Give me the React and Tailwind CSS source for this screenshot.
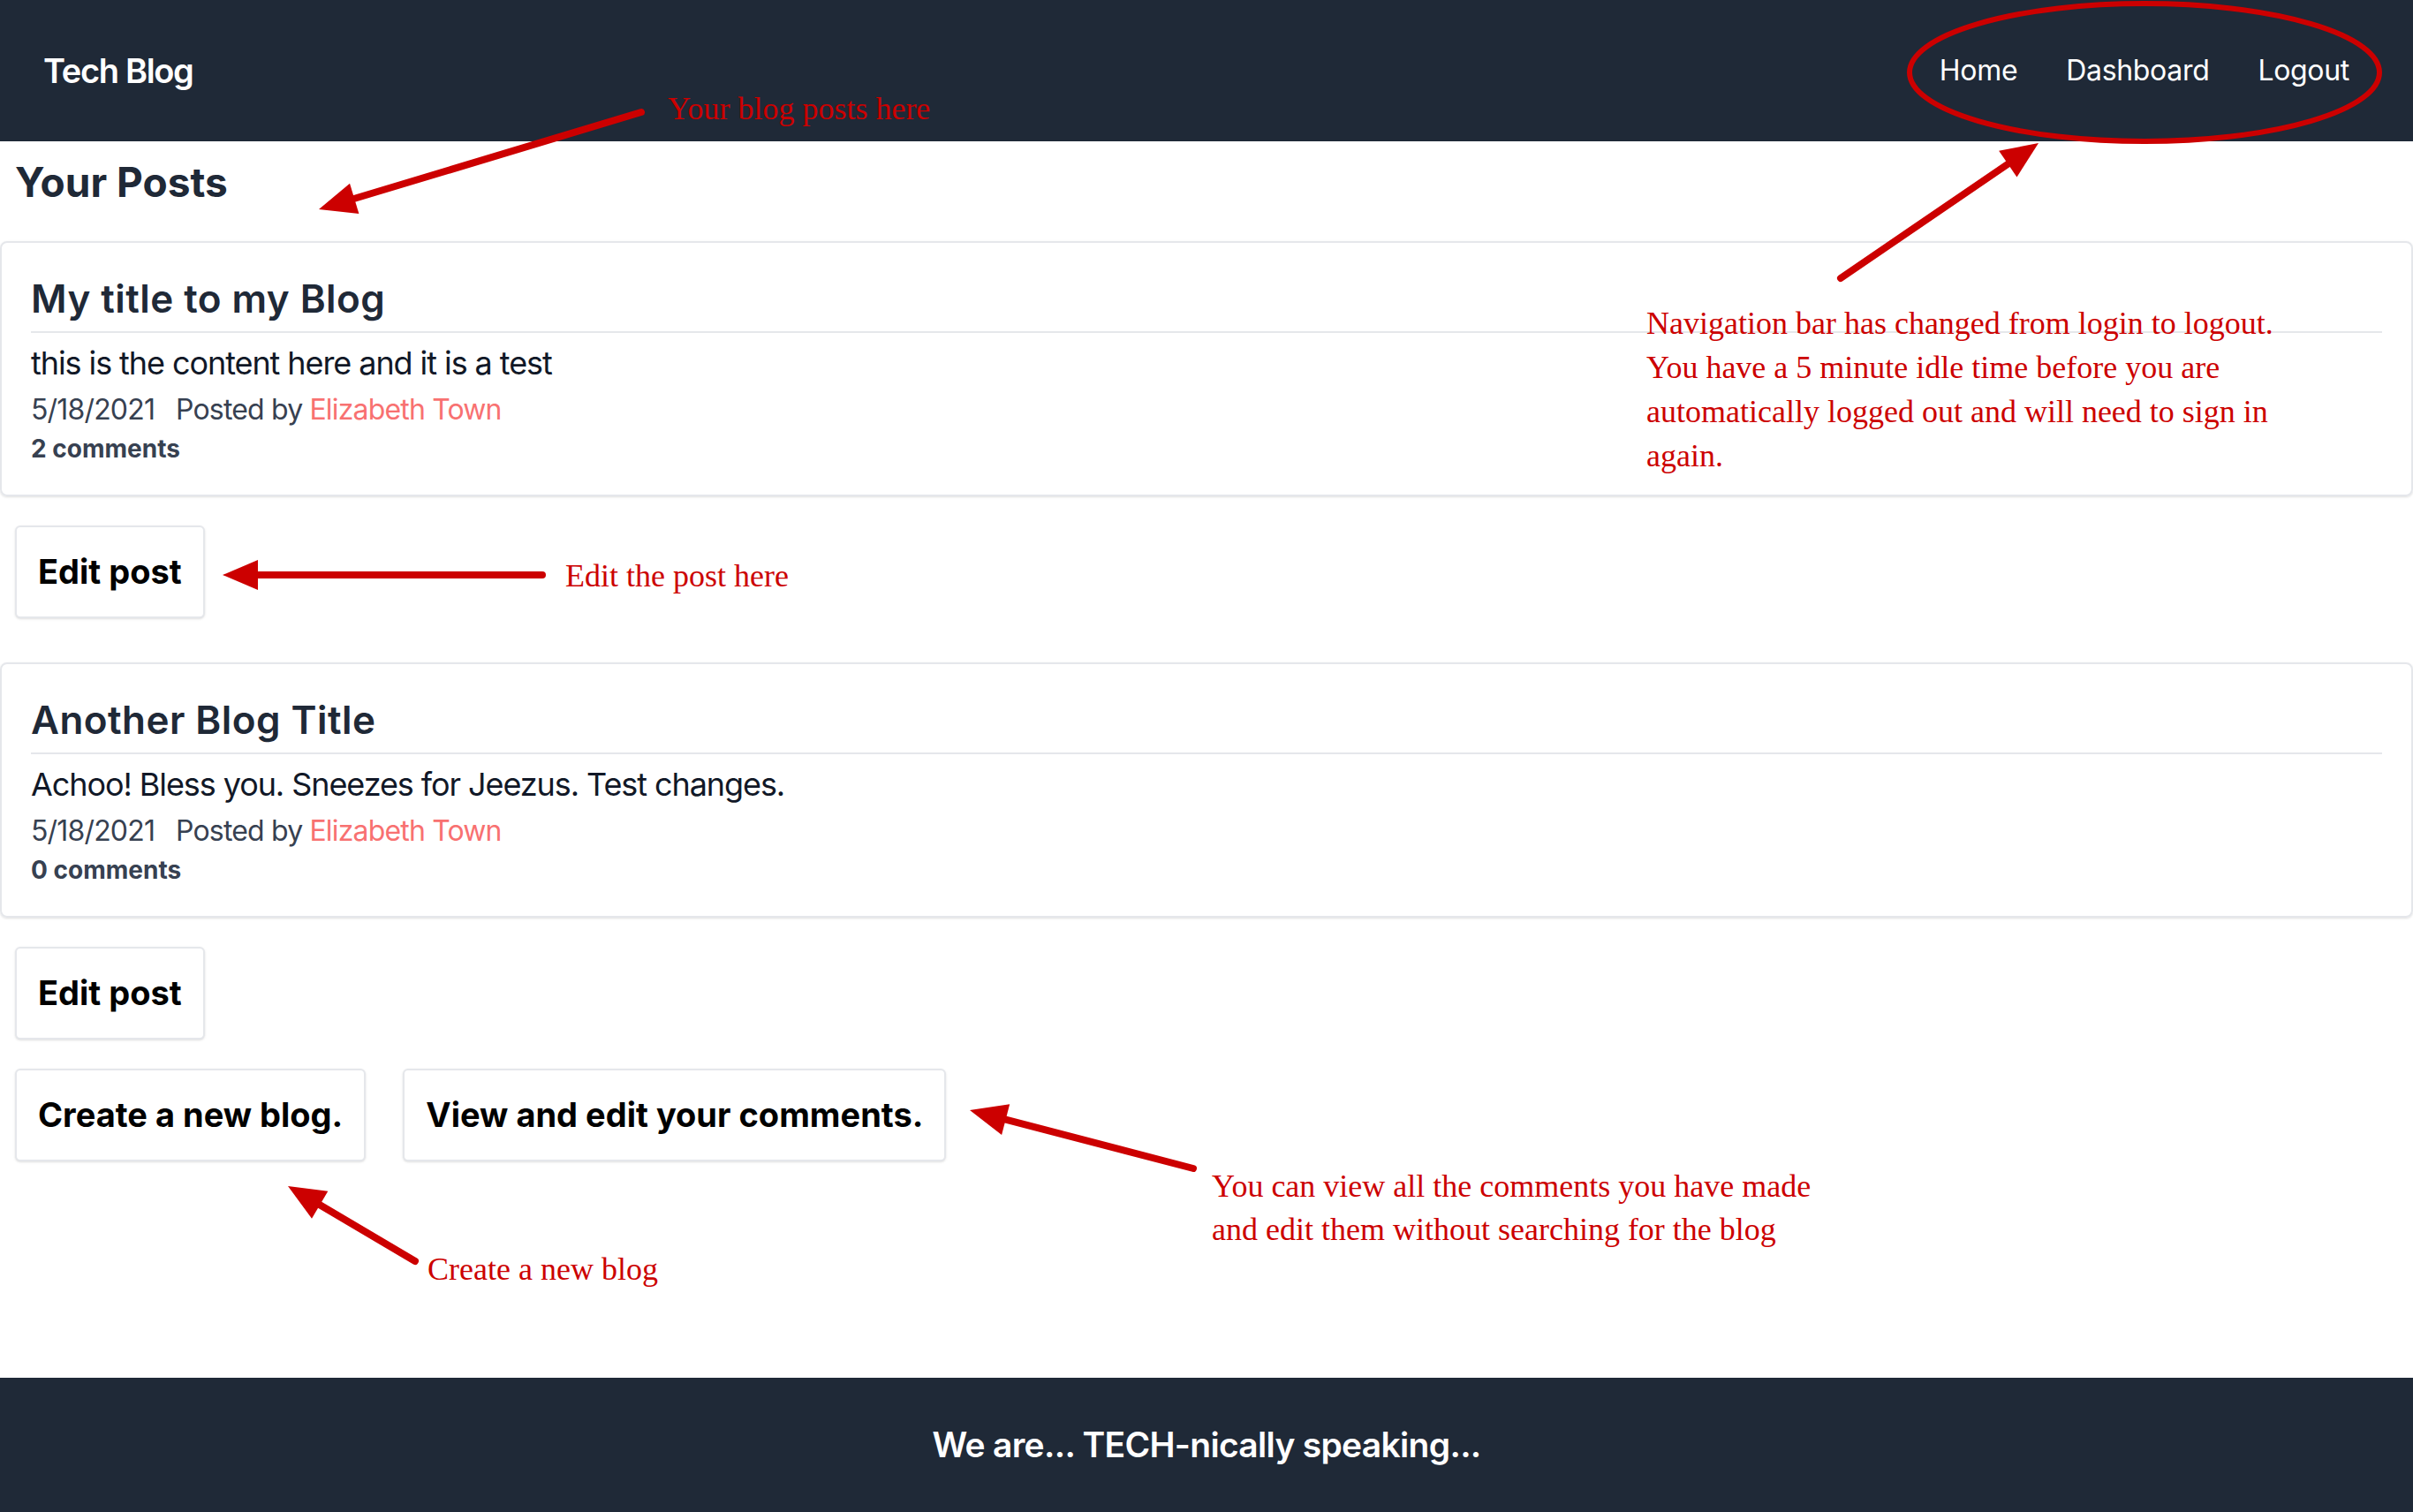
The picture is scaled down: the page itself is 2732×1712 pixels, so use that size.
import React from "react";

const posts = [
  {
    id: 1,
    title: "My title to my Blog",
    content: "this is the content here and it is a test",
    date: "5/18/2021",
    author: "Elizabeth Town",
    comments: 2,
  },
  {
    id: 2,
    title: "Another Blog Title",
    content: "Achoo! Bless you. Sneezes for Jeezus. Test changes.",
    date: "5/18/2021",
    author: "Elizabeth Town",
    comments: 0,
  },
];

// arrow drawn from tail to tip, head is a filled triangle
function Arrow({ from, to, len = 42, half = 18 }) {
  const dx = to[0] - from[0];
  const dy = to[1] - from[1];
  const d = Math.hypot(dx, dy);
  const ux = dx / d;
  const uy = dy / d;
  const bx = to[0] - ux * len;
  const by = to[1] - uy * len;
  const px = -uy * half;
  const py = ux * half;
  const pts = `${to[0]},${to[1]} ${bx + px},${by + py} ${bx - px},${by - py}`;
  return (
    <g>
      <line
        x1={from[0]}
        y1={from[1]}
        x2={bx + ux * 4}
        y2={by + uy * 4}
        stroke="#cc0000"
        strokeWidth="8"
        strokeLinecap="round"
      />
      <polygon points={pts} fill="#cc0000" />
    </g>
  );
}

function Button({ children }) {
  return (
    <button className="flex h-[105px] items-center rounded-md border-2 border-[#e5e7eb] bg-white px-[24px] text-[38px] font-bold text-black shadow-sm">
      {children}
    </button>
  );
}

function PostCard({ post }) {
  return (
    <div className="rounded-lg border-2 border-[#e5e7eb] px-[33px] pt-[37px] pb-[35px] shadow-sm">
      <h3 className="border-b-2 border-[#e5e7eb] pb-[11px] text-[44px] leading-[52px] font-semibold tracking-[0.01em] text-[#1f2937]">
        {post.title}
      </h3>
      <p className="mt-[10px] text-[36px] leading-[48px] tracking-[-0.03em] text-[#111827]">
        {post.content}
      </p>
      <p className="mt-[7px] text-[32px] leading-[44px] tracking-[-0.026em] text-[#374151]">
        {post.date}
        <span className="ml-[24px]">Posted by </span>
        <span className="text-[#f87171]">{post.author}</span>
      </p>
      <p className="mt-[5px] text-[28px] leading-[34px] font-bold text-[#374151]">
        {post.comments} comments
      </p>
    </div>
  );
}

export default function App() {
  return (
    <div className="relative flex min-h-screen flex-col bg-white font-['Inter',sans-serif]">
      {/* ── Nav ── */}
      <header className="flex h-[160px] items-center justify-between bg-[#1f2937] pl-[49px] pr-[72px] text-white">
        <span className="text-[38px] font-semibold tracking-[-0.035em]">Tech Blog</span>
        <nav className="flex items-center gap-[55px] text-[32px] tracking-[-0.01em]">
          <a>Home</a>
          <a>Dashboard</a>
          <a>Logout</a>
        </nav>
      </header>

      {/* ── Dashboard ── */}
      <main className="flex-1 pb-[60px]">
        <h2 className="ml-[17px] mt-[18px] text-[46px] leading-[57px] font-bold text-[#1f2937]">
          Your Posts
        </h2>

        <div className="mt-[38px] flex flex-col">
          {posts.map((post, i) => (
            <div key={post.id} className={i > 0 ? "mt-[50px]" : ""}>
              <PostCard post={post} />
              <div className="ml-[17px] mt-[33px] flex">
                <Button>Edit post</Button>
              </div>
            </div>
          ))}
        </div>

        <div className="ml-[17px] mt-[33px] flex gap-[42px]">
          <Button>Create a new blog.</Button>
          <Button>View and edit your comments.</Button>
        </div>
      </main>

      <footer className="flex h-[152px] items-center justify-center bg-[#1f2937]">
        <p className="text-[39px] font-semibold tracking-[-0.018em] text-white">
          We are... TECH-nically speaking...
        </p>
      </footer>

      {/* ── Annotations ── */}
      <svg
        className="pointer-events-none absolute left-0 top-0"
        width="2732"
        height="1712"
        viewBox="0 0 2732 1712"
      >
        <ellipse cx="2428" cy="82" rx="266" ry="78" fill="none" stroke="#cc0000" strokeWidth="6" />
        <Arrow from={[726, 127]} to={[361, 237]} />
        <Arrow from={[2084, 315]} to={[2308, 162]} />
        <Arrow from={[614, 651]} to={[252, 651]} len={40} half={17} />
        <Arrow from={[1351, 1323]} to={[1098, 1257]} />
        <Arrow from={[470, 1428]} to={[326, 1343]} />
      </svg>

      <div className="pointer-events-none font-['Liberation_Serif',serif] text-[36px] text-[#cc0000]">
        <p className="absolute left-[756px] top-[98px] leading-[50px]">Your blog posts here</p>
        <p className="absolute left-[1864px] top-[341px] leading-[50px]">
          Navigation bar has changed from login to logout.
          <br />
          You have a 5 minute idle time before you are
          <br />
          automatically logged out and will need to sign in
          <br />
          again.
        </p>
        <p className="absolute left-[640px] top-[627px] leading-[50px]">Edit the post here</p>
        <p className="absolute left-[1372px] top-[1319px] leading-[49px]">
          You can view all the comments you have made
          <br />
          and edit them without searching for the blog
        </p>
        <p className="absolute left-[484px] top-[1412px] leading-[50px]">Create a new blog</p>
      </div>
    </div>
  );
}
